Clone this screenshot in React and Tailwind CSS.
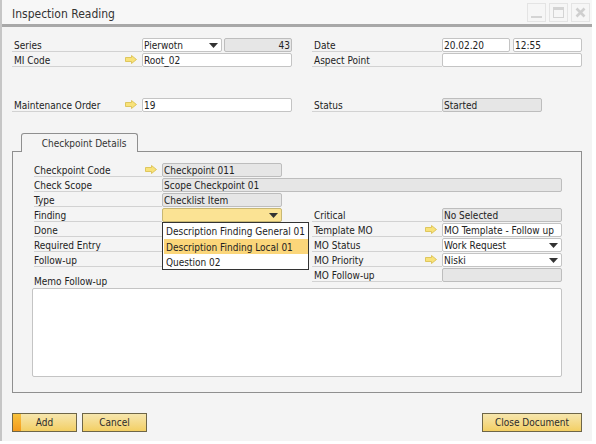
import React from 'react';

function Arrow() {
  return (
    <svg width="12" height="9" viewBox="0 0 12 9" className="absolute right-[5px] top-[2px]">
      <path d="M0.5 2.5 H6.5 V0.5 L11.5 4.5 L6.5 8.5 V6.5 H0.5 Z" fill="#f8e27a" stroke="#d8bc48" strokeWidth="0.8" />
    </svg>
  );
}

function Caret() {
  return (
    <svg width="9" height="5" viewBox="0 0 9 5" className="absolute right-[3px] top-[4px]">
      <path d="M0 0 H9 L4.5 5 Z" fill="#333333" />
    </svg>
  );
}

// label column with the grey rule beneath it
function Label({ w, text, arrow }) {
  return (
    <div className={`relative h-[14px] border-b border-[#d2d2d2] shrink-0 leading-[15px] whitespace-nowrap ${w}`}>
      {text}
      {arrow && <Arrow />}
    </div>
  );
}

function Field({ w, text, kind = 'white', right, caret }) {
  const bg = {
    white: 'bg-white border-[#c4c4c4]',
    grey: 'bg-[#e6e6e6] border-[#bdbdbd]',
    yellow: 'bg-[#fbe394] border-[#c8b873]',
  }[kind];
  return (
    <div className={`relative h-[14px] border rounded-[2px] leading-[13px] px-[1px] whitespace-nowrap shrink-0 ${bg} ${w} ${right ? 'text-right' : ''}`}>
      {text}
      {caret && <Caret />}
    </div>
  );
}

function Row({ children }) {
  return <div className="flex h-[15px]">{children}</div>;
}

function WinButton({ children }) {
  return (
    <div className="w-[19px] h-[19px] border border-[#e4e4e4] bg-[#f6f6f6] flex items-center justify-center">
      {children}
    </div>
  );
}

function SapButton({ w, text, active }) {
  return (
    <button className={`relative h-[19px] border border-[#6e6648] bg-gradient-to-b from-[#f6e6ad] to-[#f3cf62] text-[#2b2b2b] overflow-hidden ${w}`}>
      {active && <span className="absolute left-0 top-0 bottom-0 w-[8px] bg-gradient-to-b from-[#f8c23c] to-[#f39a1c]" />}
      <span className="relative">{text}</span>
    </button>
  );
}

export default function App() {
  return (
    <div className="w-[596px] h-[444px] bg-white text-[10px] text-[#222222] overflow-hidden" style={{ fontFamily: '"DejaVu Sans Condensed", "Liberation Sans", sans-serif' }}>
      <div className="w-[592px] h-[441px] bg-[#f4f4f4] border-l-2 border-[#c6c6c6] flex flex-col">
        {/* title bar */}
        <div className="h-[24px] shrink-0 flex items-center justify-between pl-[10px] pr-[2px] bg-[#f7f7f7]">
          <span className="text-[12px] text-[#333333] mt-[4px]">Inspection Reading</span>
          <div className="flex gap-[3px]">
            <WinButton><div className="w-[11px] h-[2px] bg-[#d4d4d4] mt-[10px]" /></WinButton>
            <WinButton><div className="w-[11px] h-[11px] border border-[#d4d4d4] border-t-[3px]" /></WinButton>
            <WinButton>
              <svg width="11" height="11" viewBox="0 0 11 11">
                <path d="M1.5 1.5 L9.5 9.5 M9.5 1.5 L1.5 9.5" stroke="#cfcfcf" strokeWidth="2.6" />
              </svg>
            </WinButton>
          </div>
        </div>
        <div className="h-[3px] shrink-0 bg-[#a8a8a8]" />

        {/* header fields */}
        <div className="pl-[10px] pt-[11px] flex gap-[20px] shrink-0">
          <div className="w-[280px] flex flex-col">
            <Row>
              <Label w="w-[130px] pl-[2px]" text="Series" />
              <Field w="w-[80px]" text="Pierwotn" caret />
              <div className="w-[2px]" />
              <Field w="w-[68px]" kind="grey" text="43" right />
            </Row>
            <Row>
              <Label w="w-[130px] pl-[2px]" text="MI Code" arrow />
              <Field w="w-[150px]" text="Root_02" />
            </Row>
            <div className="mt-[30px]">
              <Row>
                <Label w="w-[130px] pl-[2px]" text="Maintenance Order" arrow />
                <Field w="w-[150px]" text="19" />
              </Row>
            </div>
          </div>
          <div className="w-[270px] flex flex-col">
            <Row>
              <Label w="w-[130px] pl-[2px]" text="Date" />
              <Field w="w-[68px]" text="20.02.20" />
              <div className="w-[3px]" />
              <Field w="w-[69px]" text="12:55" />
            </Row>
            <Row>
              <Label w="w-[130px] pl-[2px]" text="Aspect Point" />
              <Field w="w-[140px]" text="" />
            </Row>
            <div className="mt-[30px]">
              <Row>
                <Label w="w-[130px] pl-[2px]" text="Status" />
                <Field w="w-[100px]" kind="grey" text="Started" />
              </Row>
            </div>
          </div>
        </div>

        {/* tab */}
        <div className="ml-[19px] mt-[20px] w-[117px] h-[19px] shrink-0 border border-b-0 border-[#8f8f8f] rounded-t-[3px] bg-[#f4f4f4] flex items-center justify-center relative z-10 mb-[-1px] pl-[9px] pt-[1px] text-[#333333]">
          Checkpoint Details
        </div>

        {/* tab panel */}
        <div className="ml-[10px] w-[570px] h-[242px] shrink-0 border border-[#8f8f8f] pt-[11px] pl-[21px] flex flex-col">
          <Row>
            <Label w="w-[128px]" text="Checkpoint Code" arrow />
            <Field w="w-[120px]" kind="grey" text="Checkpoint 011" />
          </Row>
          <Row>
            <Label w="w-[128px]" text="Check Scope" />
            <Field w="w-[400px]" kind="grey" text="Scope Checkpoint 01" />
          </Row>
          <Row>
            <Label w="w-[128px]" text="Type" />
            <Field w="w-[120px]" kind="grey" text="Checklist Item" />
          </Row>
          <div className="flex">
            <div className="flex flex-col w-[278px] shrink-0">
              <div className="relative">
                <Row>
                  <Label w="w-[128px]" text="Finding" />
                  <Field w="w-[120px]" kind="yellow" text="" caret />
                </Row>
                {/* open dropdown */}
                <div className="absolute left-[128px] top-[14px] z-20 w-[147px] h-[48px] border border-[#333333] bg-white flex flex-col pl-[1px]">
                  <div className="h-[16px] leading-[18px] pl-[2px] whitespace-nowrap">Description Finding General 01</div>
                  <div className="h-[15px] leading-[17px] pl-[2px] whitespace-nowrap bg-[#fbd67a]">Description Finding Local 01</div>
                  <div className="h-[15px] leading-[18px] pl-[2px]">Question 02</div>
                </div>
              </div>
              <Row><Label w="w-[128px]" text="Done" /></Row>
              <Row><Label w="w-[128px]" text="Required Entry" /></Row>
              <Row><Label w="w-[128px]" text="Follow-up" /></Row>
            </div>
            <div className="flex flex-col">
              <Row>
                <Label w="w-[130px] pl-[2px]" text="Critical" />
                <Field w="w-[120px]" kind="grey" text="No Selected" />
              </Row>
              <Row>
                <Label w="w-[130px] pl-[2px]" text="Template MO" arrow />
                <Field w="w-[120px]" text="MO Template - Follow up" />
              </Row>
              <Row>
                <Label w="w-[130px] pl-[2px]" text="MO Status" />
                <Field w="w-[120px]" text="Work Request" caret />
              </Row>
              <Row>
                <Label w="w-[130px] pl-[2px]" text="MO Priority" arrow />
                <Field w="w-[120px]" text="Niski" caret />
              </Row>
              <Row>
                <Label w="w-[130px] pl-[2px]" text="MO Follow-up" />
                <Field w="w-[120px]" kind="grey" text="" />
              </Row>
            </div>
          </div>
          <div className="mt-[-8px] h-[13px] leading-[13px]">Memo Follow-up</div>
          <div className="ml-[-2px] w-[530px] h-[89px] border border-[#c4c4c4] rounded-[2px] bg-white" />
        </div>

        {/* footer buttons */}
        <div className="ml-[10px] w-[570px] mt-[20px] flex shrink-0">
          <SapButton w="w-[65px]" text="Add" active />
          <div className="w-[5px]" />
          <SapButton w="w-[65px]" text="Cancel" />
          <div className="flex-1" />
          <SapButton w="w-[100px]" text="Close Document" />
        </div>
      </div>
    </div>
  );
}
